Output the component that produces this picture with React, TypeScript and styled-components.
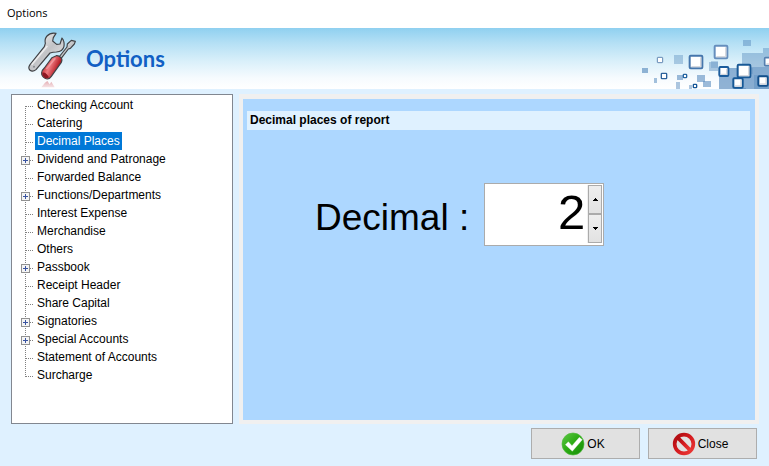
import React, { useState } from "react";
import styled, { createGlobalStyle } from "styled-components";

const GlobalStyle = createGlobalStyle`
  *, *::before, *::after { box-sizing: border-box; }
  body {
    margin: 0;
    background: #dff1ff;
    color: #000;
    font: 12px/18px "Liberation Sans", Arial, sans-serif;
  }
  button, input { font: inherit; color: inherit; }
`;

const Window = styled.div`
  display: flex;
  flex-direction: column;
  min-height: 100vh;
`;

const TitleBar = styled.header`
  height: 28px;
  padding: 0 7px;
  background: #fff;
  font: 11px/26px "Open Sans", "Noto Sans", sans-serif;
`;

const Banner = styled.div`
  display: flex;
  align-items: center;
  height: 61px;
  padding-left: 20px;
  background: linear-gradient(#8fd0f0 0%, #b5e0f5 25%, #daf0fa 55%, #f6fbfe 82%, #fff 100%);
`;

const BannerTitle = styled.h1`
  flex: 1;
  margin: 0;
  color: #1160c4;
  font: bold 22px/28px Lato, "Open Sans", sans-serif;
`;

const Body = styled.main`
  display: flex;
  flex: 1;
  gap: 6px;
  padding: 5px 10px 0 11px;
`;

const Tree = styled.ul`
  flex: none;
  width: 222px;
  margin: 0;
  padding: 1px 0 0 9px;
  border: 1px solid #828790;
  background: #fff;
  list-style: none;
`;

const TreeRow = styled.li`
  display: flex;
  align-items: center;
  height: 18px;
`;

const TreeLabel = styled.button<{ $selected: boolean }>`
  height: 18px;
  padding: 0 2px;
  border: 0;
  background: ${(p) => (p.$selected ? "#0078d7" : "transparent")};
  color: ${(p) => (p.$selected ? "#fff" : "#000")};
  line-height: 18px;
  white-space: nowrap;
`;

const Panel = styled.section`
  flex: 1;
  display: flex;
  flex-direction: column;
  min-width: 0;
  padding: 12px 5px 0 4px;
  border: solid #f0f0f0;
  border-width: 5px 4px 4px;
  background: #add7ff;
`;

const PanelTitle = styled.h2`
  margin: 0;
  padding: 0 3px;
  background: #dff1ff;
  font-size: 12px;
  font-weight: bold;
  line-height: 19px;
`;

const Field = styled.div`
  display: flex;
  align-items: flex-start;
  gap: 15px;
  padding: 53px 68px;
`;

const FieldLabel = styled.label`
  padding-top: 3px;
  font-size: 37px;
  line-height: 63px;
  white-space: nowrap;
`;

const Spinner = styled.div`
  display: flex;
  width: 120px;
  height: 63px;
  padding: 1px 1px 2px;
  border: 1px solid #ababab;
  background: #fff;
`;

const SpinnerInput = styled.input`
  flex: 1;
  min-width: 0;
  padding: 0 2px 4px 0;
  border: 0;
  outline: 0;
  background: transparent;
  font-size: 49px;
  line-height: 54px;
  text-align: right;
`;

const SpinnerButtons = styled.div`
  display: flex;
  flex-direction: column;
  width: 15px;
  padding-left: 1px;
  background: #f0f0f0;
`;

const StepButton = styled.button`
  display: flex;
  flex: 1;
  align-items: center;
  justify-content: center;
  padding: 0;
  border: 1px solid #ababab;
  background: linear-gradient(#eee, #e2e2e2);
`;

const Footer = styled.footer`
  display: flex;
  justify-content: flex-end;
  gap: 8px;
  padding: 4px 12px 7px;
`;

const ActionButton = styled.button`
  display: flex;
  align-items: center;
  justify-content: center;
  gap: 2px;
  width: 109px;
  height: 31px;
  padding: 0 5px 0 0;
  border: 1px solid #adadad;
  background: #e1e1e1;
`;

const ToolsIcon = () => (
  <svg width="66" height="61" viewBox="0 9 198 183" aria-hidden="true">
    <defs>
      <linearGradient id="steel" x1="0" y1="0" x2="1" y2="1">
        <stop offset="0.1" stopColor="#f4f4f4" />
        <stop offset="0.5" stopColor="#c2c3c6" />
        <stop offset="1" stopColor="#f2f2f2" />
      </linearGradient>
      <linearGradient id="grip" x1="0" y1="0" x2="1" y2="0.5">
        <stop offset="0.2" stopColor="#c5262b" />
        <stop offset="0.5" stopColor="#ee7b80" />
        <stop offset="0.85" stopColor="#b51c25" />
      </linearGradient>
      <linearGradient id="mirror" x1="0" y1="0" x2="0" y2="1">
        <stop offset="0" stopColor="#db8e95" />
        <stop offset="1" stopColor="#e9b5ba" stopOpacity="0.5" />
      </linearGradient>
    </defs>
    <path d="M64 187 L75 173 L82 168 L89 178 L94 170 L104 187 Z" fill="url(#mirror)" opacity="0.75" />
    <g stroke="#3f4145" strokeWidth="3.5" strokeLinejoin="round">
      <path
        d="M108 25 Q91 22 81 33 Q73 42 76 55 L73 65 L30 119 Q23 129 30 136 Q38 142 48 134 L90 84 Q99 81 109 81 Q128 80 132 64 Q134 49 126 39 L120 57 L110 58 L98 48 L100 38 Z"
        fill="url(#steel)"
      />
      <path d="M117 96 L141 66 L142 57 L154 46 L166 49 L163 57 L151 70 L145 72 L123 101 Z" fill="url(#steel)" />
      <path
        d="M109 92 Q116 91 123 98 Q128 104 124 112 L94 154 Q86 166 75 160 Q64 154 65 143 Q66 135 73 129 L96 98 Z"
        fill="url(#grip)"
      />
    </g>
    <path d="M82 63 L35 119" stroke="#fff" strokeWidth="5" opacity="0.65" />
    <path d="M67 143 Q77 139 87 157 Q78 165 68 152 Z" fill="#8e1722" />
    <path d="M106 100 L79 132" stroke="#f5aaae" strokeWidth="5" opacity="0.65" />
    <circle cx="42" cy="125" r="3" fill="#85888d" />
  </svg>
);

type Square = [x: number, y: number, size: number, stroke: number, color: string];

const blocks: [number, number, number, number, number][] = [
  [369, 60, 24, 18, 0.5],
  [162, 105, 27, 27, 0.42],
  [66, 144, 18, 15, 0.65],
  [102, 174, 9, 15, 0.55],
  [171, 165, 18, 15, 0.6],
  [168, 186, 12, 21, 0.5],
  [207, 195, 9, 12, 0.5],
  [231, 165, 24, 21, 0.6],
  [249, 183, 24, 18, 0.6],
  [267, 126, 27, 27, 0.45],
  [273, 123, 21, 21, 0.35],
  [297, 144, 69, 63, 0.68],
  [366, 99, 81, 42, 0.45],
  [429, 84, 18, 15, 0.45],
  [366, 141, 81, 66, 0.72],
  [387, 144, 12, 18, 0.35],
  [402, 165, 45, 42, 0.45],
  [345, 204, 33, 3, 0.6],
];

const squares: Square[] = [
  [112, 112, 16, 3, "#6288b4"],
  [209, 107, 38, 6, "#4576ac"],
  [284, 77, 38, 6, "#658ebd"],
  [124, 160, 16, 4, "#2d629b"],
  [190, 163, 10, 4, "#2666a1"],
  [220, 193, 10, 4, "#175898"],
  [298, 141, 27, 6, "#1b5c9c"],
  [353, 134, 38, 6, "#195996"],
  [340, 175, 28, 6, "#165896"],
  [415, 169, 28, 6, "#13508c"],
  [434, 113, 24, 5, "#557faf"],
];

const SquaresArt = () => (
  <svg width="149" height="61" viewBox="0 24 447 183" aria-hidden="true">
    {blocks.map(([x, y, w, h, o]) => (
      <rect key={`${x}-${y}`} x={x} y={y} width={w} height={h} fill="#5b8ebf" opacity={o} />
    ))}
    {squares.map(([x, y, s, w, color]) => (
      <g key={`${x}-${y}`}>
        <rect x={x} y={y} width={s} height={s} rx={w / 2} fill="#fff" stroke={color} strokeWidth={w} />
        {s > 20 && (
          <path
            d={`M${x + s - 5} ${y + 5} V${y + s - 5} H${x + 5}`}
            fill="none"
            stroke="#d6d9df"
            strokeWidth="4"
          />
        )}
      </g>
    ))}
  </svg>
);

const Branch = ({ expandable, first, last }: { expandable: boolean; first: boolean; last: boolean }) => (
  <svg width="14" height="18" viewBox="0 0 14 18" shapeRendering="crispEdges" aria-hidden="true">
    <g fill="none" stroke="#808080" strokeDasharray="1 1">
      <path d={`M4.5 ${first ? 10 : 0} V${last ? 11 : 18}`} />
      <path d="M5 10.5 H13" />
    </g>
    {expandable && (
      <>
        <rect x="0.5" y="6.5" width="8" height="8" fill="#f4f4f4" stroke="#919191" />
        <path d="M2 10.5 H7 M4.5 8 V13" stroke="#3953a0" />
      </>
    )}
  </svg>
);

const OkIcon = () => (
  <svg width="24" height="24" viewBox="0 0 72 72" aria-hidden="true">
    <defs>
      <linearGradient id="okFill" x1="0" y1="0" x2="1" y2="1">
        <stop offset="0" stopColor="#5fc947" />
        <stop offset="0.5" stopColor="#2aaa12" />
        <stop offset="1" stopColor="#168b08" />
      </linearGradient>
    </defs>
    <circle cx="36" cy="36" r="33" fill="url(#okFill)" stroke="#4db83a" strokeWidth="2" />
    <path d="M13 38 L22 29 L33 41 L55 16 L64 23 L34 58 Z" fill="#fff" stroke="#daf2d5" />
  </svg>
);

const CloseIcon = () => (
  <svg width="24" height="24" viewBox="0 0 72 72" aria-hidden="true">
    <defs>
      <linearGradient id="closeFill" x1="0" y1="0" x2="1" y2="1">
        <stop offset="0" stopColor="#ac0b10" />
        <stop offset="0.5" stopColor="#d51b20" />
        <stop offset="1" stopColor="#ed3b37" />
      </linearGradient>
    </defs>
    <g fill="none" stroke="url(#closeFill)" strokeWidth="11">
      <circle cx="36" cy="36" r="28" />
      <path d="M17 17 L55 55" />
    </g>
  </svg>
);

const items: { label: string; expandable?: boolean }[] = [
  { label: "Checking Account" },
  { label: "Catering" },
  { label: "Decimal Places" },
  { label: "Dividend and Patronage", expandable: true },
  { label: "Forwarded Balance" },
  { label: "Functions/Departments", expandable: true },
  { label: "Interest Expense" },
  { label: "Merchandise" },
  { label: "Others" },
  { label: "Passbook", expandable: true },
  { label: "Receipt Header" },
  { label: "Share Capital" },
  { label: "Signatories", expandable: true },
  { label: "Special Accounts", expandable: true },
  { label: "Statement of Accounts" },
  { label: "Surcharge" },
];

const Arrow = ({ d }: { d: string }) => (
  <svg width="5" height="3" viewBox="0 0 5 3" shapeRendering="crispEdges" aria-hidden="true">
    <path d={d} fill="#000" />
  </svg>
);

export default function App() {
  const [selected, setSelected] = useState("Decimal Places");
  const [places, setPlaces] = useState(2);

  return (
    <Window>
      <GlobalStyle />
      <TitleBar>Options</TitleBar>
      <Banner>
        <ToolsIcon />
        <BannerTitle>Options</BannerTitle>
        <SquaresArt />
      </Banner>
      <Body>
        <Tree>
          {items.map(({ label, expandable = false }, i) => (
            <TreeRow key={label}>
              <Branch expandable={expandable} first={i === 0} last={i === items.length - 1} />
              <TreeLabel type="button" $selected={label === selected} onClick={() => setSelected(label)}>
                {label}
              </TreeLabel>
            </TreeRow>
          ))}
        </Tree>
        <Panel>
          <PanelTitle>Decimal places of report</PanelTitle>
          <Field>
            <FieldLabel htmlFor="places">Decimal :</FieldLabel>
            <Spinner>
              <SpinnerInput
                id="places"
                inputMode="numeric"
                value={places}
                onChange={(e) => setPlaces(Number(e.target.value.replace(/\D/g, "")))}
              />
              <SpinnerButtons>
                <StepButton type="button" aria-label="Increase" onClick={() => setPlaces(places + 1)}>
                  <Arrow d="M2 0h1v1h1v1h1v1H0V2h1V1h1z" />
                </StepButton>
                <StepButton type="button" aria-label="Decrease" onClick={() => setPlaces(Math.max(0, places - 1))}>
                  <Arrow d="M0 0h5v1H4v1H3v1H2V2H1V1H0z" />
                </StepButton>
              </SpinnerButtons>
            </Spinner>
          </Field>
        </Panel>
      </Body>
      <Footer>
        <ActionButton type="button">
          <OkIcon />
          OK
        </ActionButton>
        <ActionButton type="button">
          <CloseIcon />
          Close
        </ActionButton>
      </Footer>
    </Window>
  );
}
